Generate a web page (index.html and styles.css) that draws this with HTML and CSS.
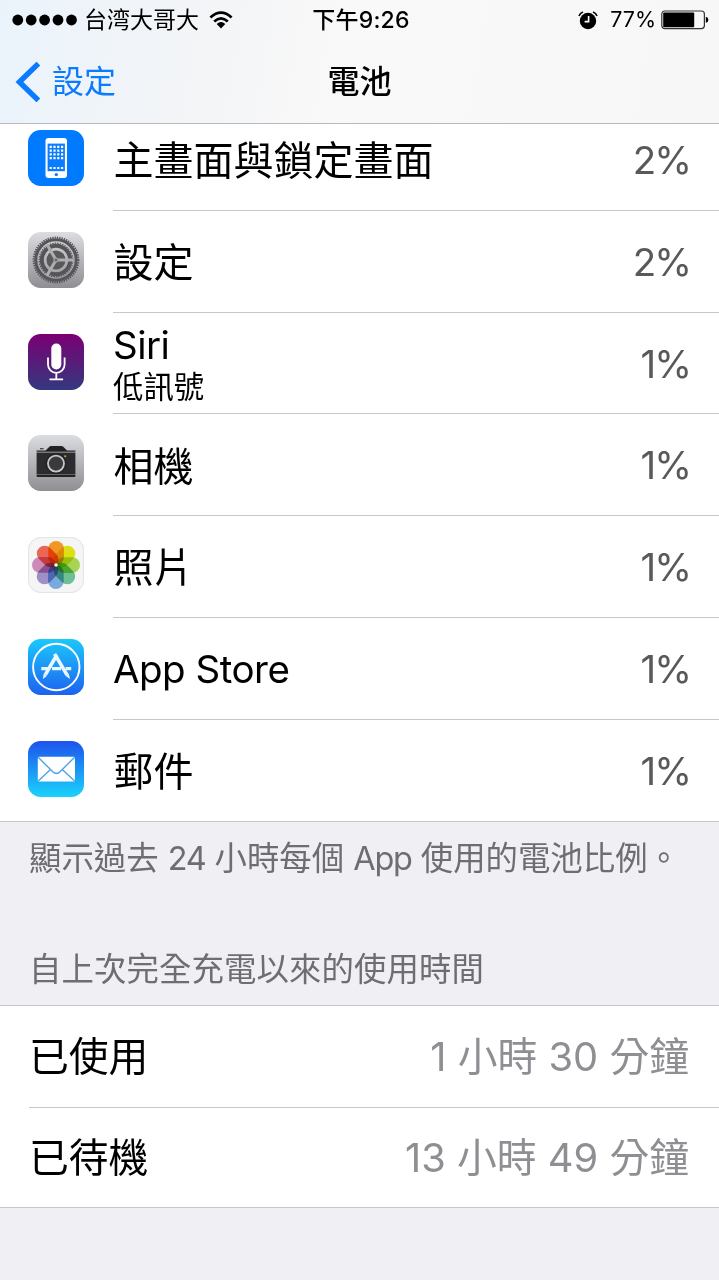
FILE: index.html
```
<!DOCTYPE html>
<html lang="zh-Hant">
<head>
    <meta charset="UTF-8">
    <meta name="viewport" content="width=device-width, initial-scale=1.0">
    <title>電池</title>
    <link rel="stylesheet" href="styles.css">
</head>
<body>
    <header class="top">
        <div class="status">
            <div class="status-left">
                <svg class="dots" width="66" height="12" viewBox="0 0 66 12"><circle cx="5.8" cy="6" r="5.4"/><circle cx="19.2" cy="6" r="5.4"/><circle cx="32.6" cy="6" r="5.4"/><circle cx="46" cy="6" r="5.4"/><circle cx="59.5" cy="6" r="5.4"/></svg>
                <span class="carrier">台湾大哥大</span>
                <svg class="wifi" width="24" height="18" viewBox="0 0 24 18" fill="none" stroke="#000" stroke-width="2.7">
                    <path d="M1.4 6.4Q12-3.2 22.6 6.4"/>
                    <path d="M5.2 10.4Q12 4.2 18.8 10.4"/>
                    <path d="M7.7 13Q12 9 16.3 13L12 17.4z" fill="#000" stroke="none"/>
                </svg>
            </div>
            <div class="clock">下午<span>9:26</span></div>
            <div class="status-right">
                <svg class="alarm" width="20" height="19" viewBox="0 0 20 19">
                    <circle cx="10" cy="10" r="8.2"/>
                    <path d="M1 5Q2 2 5 1M19 5Q18 2 15 1" fill="none" stroke="#000" stroke-width="1.6"/>
                    <path d="M10.6 5v5.6H6.6" fill="none" stroke="#fff" stroke-width="1.6"/>
                </svg>
                <span class="charge">77%</span>
                <svg class="battery" width="48" height="20" viewBox="0 0 48 20">
                    <rect x=".8" y="1" width="42.6" height="17.6" rx="3" fill="none" stroke="#333" stroke-width="1.2"/>
                    <rect x="2.2" y="2.4" width="31" height="14.8" rx="1"/>
                    <path d="M44.8 6.8q2.6.4 2.6 3t-2.6 3z"/>
                </svg>
            </div>
        </div>
        <nav class="nav">
            <a class="back">
                <svg width="25" height="40" viewBox="0 0 25 40"><path d="M23.4 1.6L4.4 20l19 18.4" fill="none" stroke="#0a7aff" stroke-width="5.4"/></svg>
                <span>設定</span>
            </a>
            <h1>電池</h1>
        </nav>
    </header>

    <ul class="apps">
        <li>
            <svg class="icon" viewBox="0 0 56 56">
                <rect width="56" height="56" rx="12.5" fill="#007aff"/>
                <rect x="17.5" y="8" width="21.5" height="40" rx="3" fill="#fff"/>
                <rect x="19.6" y="13.6" width="17.3" height="27.6" fill="#0a7dff"/>
                <path d="M21.6 16.8h14.4M21.6 20.6h14.4M21.6 24.4h14.4M21.6 28.2h14.4M21.6 38h14.4" stroke="#fff" stroke-width="2.2" stroke-dasharray="2.2 1.6"/>
                <circle cx="28.3" cy="44.6" r="1.7" fill="#0a7dff"/>
            </svg>
            <div class="row"><span class="name">主畫面與鎖定畫面</span><span class="percent">2%</span></div>
        </li>
        <li>
            <svg class="icon" viewBox="0 0 56 56">
                <defs><linearGradient id="silver" x2="0" y2="1"><stop stop-color="#dcdde0"/><stop offset="1" stop-color="#8e8e93"/></linearGradient></defs>
                <rect width="56" height="56" rx="12.5" fill="url(#silver)"/>
                <g fill="none" stroke="#555558">
                    <circle cx="28" cy="28" r="22.4" stroke-width="2" stroke-dasharray="1.35 1"/>
                    <circle cx="28" cy="28" r="20.2" stroke-width="3"/>
                    <circle cx="28" cy="28" r="14.2" stroke-width="4"/>
                    <circle cx="28" cy="28" r="16.8" stroke-width="1.3" stroke-dasharray="1.3 1.2"/>
                </g>
                <circle cx="28" cy="28" r="9.5" fill="#59595c"/>
                <path d="M28 28h18M28 28l-9-15.6M28 28l-9 15.6" stroke="#adaeb1" stroke-width="3"/>
                <circle cx="28" cy="28" r="2.6" fill="#9a9a9d"/>
                <circle cx="28" cy="28" r="1" fill="#505053"/>
            </svg>
            <div class="row"><span class="name">設定</span><span class="percent">2%</span></div>
        </li>
        <li>
            <svg class="icon" viewBox="0 0 56 56">
                <defs><linearGradient id="purple" x2="0" y2="1"><stop stop-color="#7a0073"/><stop offset="1" stop-color="#34387e"/></linearGradient></defs>
                <rect width="56" height="56" rx="12.5" fill="url(#purple)"/>
                <rect x="23.3" y="9.5" width="10" height="26" rx="5" fill="#fff"/>
                <path d="M20 23.5v7a8.3 8.3 0 0 0 16.6 0v-7M28.3 39v6M21.5 45.3h13.6" fill="none" stroke="#fff" stroke-width="1.8"/>
            </svg>
            <div class="row"><div class="two-line"><span class="latin">Siri</span><small>低訊號</small></div><span class="percent">1%</span></div>
        </li>
        <li>
            <svg class="icon" viewBox="0 0 56 56">
                <rect width="56" height="56" rx="12.5" fill="url(#silver)"/>
                <path d="M8.6 15.4h9l4-3.8q.6-.6 1.4-.6h10.6q.8 0 1.4.6l4 3.8h8.4v1.4H8.6zM8.6 39.6h38.8v1.2q0 1.2-1.2 1.2H9.8q-1.2 0-1.2-1.2zM12 13.2h3.6v1H12z" fill="#222224"/>
                <path d="M8.6 17.6h38.8v21.3H8.6z" fill="#2c2c2e"/>
                <circle cx="28" cy="28.6" r="8" fill="#3a3a3c" stroke="#c5c6c9" stroke-width="1.8"/>
                <circle cx="28" cy="28.6" r="10" fill="none" stroke="#202022" stroke-width="1"/>
                <circle cx="37.2" cy="21.2" r="1" fill="#e0a93a"/>
            </svg>
            <div class="row"><span class="name">相機</span><span class="percent">1%</span></div>
        </li>
        <li>
            <svg class="icon" viewBox="0 0 56 56">
                <rect x=".4" y=".4" width="55.2" height="55.2" rx="12.3" fill="#f5f5f6" stroke="#dcdcde" stroke-width=".8"/>
                <g class="petals">
                    <rect x="20.3" y="4" width="15.6" height="24" rx="7.8" fill="#fb9d25"/>
                    <rect x="20.3" y="4" width="15.6" height="24" rx="7.8" fill="#e6ea14" transform="rotate(45 28 28)"/>
                    <rect x="20.3" y="4" width="15.6" height="24" rx="7.8" fill="#b0dc58" transform="rotate(90 28 28)"/>
                    <rect x="20.3" y="4" width="15.6" height="24" rx="7.8" fill="#72c89a" transform="rotate(135 28 28)"/>
                    <rect x="20.3" y="4" width="15.6" height="24" rx="7.8" fill="#7db2e4" transform="rotate(180 28 28)"/>
                    <rect x="20.3" y="4" width="15.6" height="24" rx="7.8" fill="#a596cf" transform="rotate(225 28 28)"/>
                    <rect x="20.3" y="4" width="15.6" height="24" rx="7.8" fill="#d690bf" transform="rotate(270 28 28)"/>
                    <rect x="20.3" y="4" width="15.6" height="24" rx="7.8" fill="#f46a58" transform="rotate(315 28 28)"/>
                </g>
                <circle cx="28" cy="28" r="1.8" fill="#fff"/>
            </svg>
            <div class="row"><span class="name">照片</span><span class="percent">1%</span></div>
        </li>
        <li>
            <svg class="icon" viewBox="0 0 56 56">
                <defs><linearGradient id="store" x2="0" y2="1"><stop stop-color="#1bc8fb"/><stop offset="1" stop-color="#1d62f0"/></linearGradient></defs>
                <rect width="56" height="56" rx="12.5" fill="url(#store)"/>
                <circle cx="28.3" cy="28" r="23.2" fill="none" stroke="#fff" stroke-width="1.9"/>
                <g stroke="#e9f7ff" fill="none">
                    <path d="M13.3 29.7h7M24 29.7h9M37.6 29.7h5.6" stroke-width="3.2"/>
                    <path d="M28.8 16L17.4 35.6" stroke-width="3.6"/>
                    <path d="M26.6 14.8L39 35.8" stroke-width="3.6"/>
                </g>
                <path d="M15.6 34.8l3.4 2-4 3.3zM37.4 36.8l3.4-2 1.2 5.3z" fill="#e9f7ff"/>
            </svg>
            <div class="row"><span class="latin">App Store</span><span class="percent">1%</span></div>
        </li>
        <li>
            <svg class="icon" viewBox="0 0 56 56">
                <defs><linearGradient id="mail" x2="0" y2="1"><stop stop-color="#1e52ed"/><stop offset="1" stop-color="#1ad4fb"/></linearGradient></defs>
                <rect width="56" height="56" rx="12.5" fill="url(#mail)"/>
                <rect x="9.8" y="15.8" width="37.2" height="24.6" rx="1.2" fill="#fff"/>
                <path d="M10.2 16.3l14.6 14.5q3.6 3.4 7.2 0L46.6 16.3M10.2 40l12.3-11.5M46.6 40L34.3 28.5" fill="none" stroke="#4ba4e8" stroke-width="1.4"/>
            </svg>
            <div class="row"><span class="name">郵件</span><span class="percent">1%</span></div>
        </li>
    </ul>

    <p class="note">顯示過去 <span>24</span> 小時每個 <span>App</span> 使用的電池比例。</p>

    <h2>自上次完全充電以來的使用時間</h2>
    <div class="usage">
        <div class="line"><span>已使用</span><span class="value"><b>1</b> 小時 <b>30</b> 分鐘</span></div>
        <div class="line"><span>已待機</span><span class="value"><b>13</b> 小時 <b>49</b> 分鐘</span></div>
    </div>
</body>
</html>
```
FILE: styles.css
```
* { box-sizing: border-box; }
body {
    margin: 0;
    height: 1280px;
    overflow: hidden;
    background: #efeff4;
    color: #000;
    font-family: Inter, "Noto Sans CJK TC", sans-serif;
    line-height: 1;
}
svg { display: block; flex: none; }
.top {
    position: relative;
    z-index: 1;
    height: 124px;
    border-bottom: 1px solid #b9b9bb;
    background: linear-gradient(100deg, #eaf3fb 0, #f4f5f7 30%, #f9f9f9 48%, #f7f7f7 100%);
}
.status, .nav {
    display: grid;
    grid-template-columns: 1fr auto 1fr;
    align-items: center;
}
.status {
    height: 40px;
    padding: 0 10px 0 12px;
    font-size: 23px;
}
.status-left, .status-right {
    display: flex;
    align-items: center;
}
.status-right { justify-content: flex-end; }
.carrier { margin: 0 10px 0 6px; font-size: 23px; }
.clock { padding-left: 1px; font-weight: 500; letter-spacing: 0.2px; }
.charge { margin: 0 5px 0 12px; font-size: 21.5px; }
.nav { height: 83px; }
.back {
    display: flex;
    align-items: center;
    padding-left: 15px;
    color: #0a7aff;
    font-size: 32px;
}
.back span { margin-left: 12px; }
h1 { margin: 0; font-size: 32px; font-weight: 500; }
.apps {
    margin: -15px 0 0;
    padding: 0;
    list-style: none;
    background: #fff;
    border-bottom: 1px solid #c8c7cc;
}
.apps li {
    display: flex;
    height: 101.75px;
    padding-left: 28.4px;
}
.icon {
    width: 56px;
    height: 56px;
    margin: 21px 28.6px 0 0;
}
.row {
    display: flex;
    flex: 1;
    align-items: center;
    justify-content: space-between;
    padding-right: 30px;
    border-bottom: 1px solid #c8c7cc;
    font-size: 40px;
}
.apps li:last-child .row { border-bottom: 0; }
.name { padding: 4px 0 0 0.5px; }
.two-line { padding-top: 1px; }
.two-line small { display: block; margin-top: 7px; font-size: 30.4px; }
.latin { padding-top: 2px; font-size: 38.5px; letter-spacing: -0.5px; }
.percent {
    margin-right: -1px;
    padding-top: 2px;
    color: #59595c;
    font-size: 38.5px;
    letter-spacing: -2px;
}
.petals rect { mix-blend-mode: multiply; }
.note, h2 {
    margin: 0;
    padding-left: 29px;
    color: #6d6d72;
    font-size: 32.4px;
    font-weight: 400;
    white-space: nowrap;
}
.note { height: 110px; padding-top: 21px; }
.note span { letter-spacing: -1.2px; }
h2 { height: 73px; padding-top: 22px; letter-spacing: 0.1px; }
.usage {
    padding-left: 29px;
    background: #fff;
    border: solid #c8c7cc;
    border-width: 1px 0;
}
.line {
    display: flex;
    align-items: center;
    justify-content: space-between;
    height: 100.5px;
    padding: 1px 30px 0 0;
    font-size: 39.8px;
}
.line + .line { border-top: 1px solid #c8c7cc; }
.value { color: #8e8e93; }
.value b { font-weight: 400; }
```
